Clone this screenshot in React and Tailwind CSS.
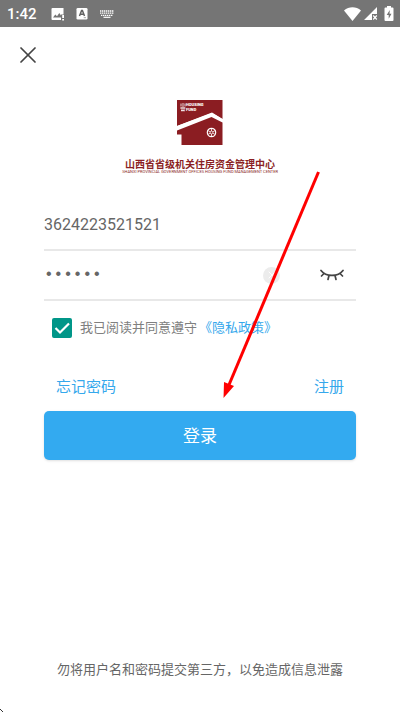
import { useState } from "react";
import { X } from "lucide-react";

function StatusBar() {
  return (
    <header className="flex h-[27px] items-center justify-between bg-[#757575] pr-1 pl-[7px] text-white">
      <div className="flex items-center">
        <span className="w-[44px] text-[15px] leading-5 font-medium">1:42</span>
        <svg className="h-[14px] w-[14px]" viewBox="0 0 14 14" fill="currentColor">
          <path d="M1.5 1H12.5V7.5H10V13H1.5Q.5 13 .5 12V2Q.5 1 1.5 1Z" />
          <path d="M2 10.5 4.3 7.5 6 9.3 8.3 6 10 8.4V10.5Z" fill="#757575" />
          <path d="M11.2 8H13V11H11.2ZM11.2 12H13V13.5H11.2Z" />
        </svg>
        <svg className="ml-[11px] h-[13px] w-[12px]" viewBox="0 0 12 13">
          <rect x=".5" y="1" width="11" height="11.5" rx="1.3" fill="currentColor" />
          <path d="M3.5 9 5.6 3.5H6.4L8.5 9M4.3 7.2H7.7" fill="none" stroke="#626262" strokeWidth="1.5" />
          <path d="M7.7 10.7H10" stroke="#aaa" />
        </svg>
        <svg className="ml-3 h-[10px] w-[14px]" viewBox="0 0 14 10" stroke="currentColor">
          <path d="M0 2H14M0 4.2H14M1 6.4H13" strokeWidth="1.3" strokeDasharray="1.4 .6" />
          <path d="M3.5 8.3H10.5" strokeWidth="1.2" />
        </svg>
      </div>
      <div className="flex items-center">
        <svg className="h-[14px] w-[17px]" viewBox="0 0 17 14" fill="currentColor">
          <path d="M0 3.5C5-.8 12-.8 17 3.5L8.5 14Z" />
        </svg>
        <svg className="ml-[3px] h-[14px] w-[14px]" viewBox="0 0 14 14">
          <path d="M0 13 13 0V7H8V13Z" fill="currentColor" />
          <path d="M9.2 8.5 12.8 12.5M12.8 8.5 9.2 12.5" stroke="currentColor" strokeWidth="1.2" />
        </svg>
        <svg className="mr-[2px] ml-[6px] h-[15px] w-[10px]" viewBox="0 0 10 15">
          <path d="M3 0H7V1.5H8.5Q9.5 1.5 9.5 2.5V14Q9.5 15 8.5 15H1.5Q.5 15 .5 14V2.5Q.5 1.5 1.5 1.5H3Z" fill="currentColor" />
          <path d="M5.8 4 2.7 9H4.7V12.7L7.5 7.7H5.5Z" fill="#757575" />
        </svg>
      </div>
    </header>
  );
}

function Logo() {
  return (
    <div className="flex flex-col items-center text-[#8b1f24]">
      <svg className="h-[46px] w-[46px]" viewBox="0 0 46 46">
        <path d="M0 0H45.5V19L35 12.5 0 26Z" fill="#8b1d22" />
        <path d="M0 26 35 13 45.5 19V22L34.5 16.5 0 31Z" fill="#fff" />
        <path d="M0 30.5 34.5 17 45.5 22.5V45H4.5V34.5H0Z" fill="#8b1d22" />
        <g fill="none" stroke="#fff">
          <path d="M4 3.5V6.5M6 3V7M8 3.5V6.5M3 8H8.5M4 10.5H7.5M5 7V11.5M7 7V11.5" strokeWidth=".8" />
          <circle cx="34.5" cy="32.5" r="4.2" strokeWidth="1.2" />
          <circle cx="34.5" cy="32.5" r="1.4" strokeWidth=".8" />
          <path d="M34.5 28.5V31M34.5 34V36.5M30.8 30.5 33.2 31.8M35.8 33.2 38.2 34.5M30.8 34.5 33.2 33.2M35.8 31.8 38.2 30.5" strokeWidth=".8" />
        </g>
        <text x="9" y="6" fill="#fff" fontSize="4" fontWeight="900">HOUSING</text>
        <text x="9" y="11" fill="#fff" fontSize="4" fontWeight="900">FUND</text>
      </svg>
      <h1 className="mt-[14px] text-[10px] leading-[10px] font-bold whitespace-nowrap">山西省省级机关住房资金管理中心</h1>
      <p className="text-[4px] leading-[4px] whitespace-nowrap">
        SHANXI PROVINCIAL GOVERNMENT OFFICES HOUSING FUND MANAGEMENT CENTER
      </p>
    </div>
  );
}

function ClosedEye() {
  return (
    <svg className="h-3 w-6" viewBox="0 0 24 12" fill="none" stroke="#444" strokeWidth="1.7" strokeLinecap="round">
      <path d="M1 1.5C6 8 18 8 23 1.5M4 4.5 1.5 7M9 6.5 8 10.5M15 6.5 16 10.5M20 4.5 22.5 7" />
    </svg>
  );
}

export default function App() {
  const [account, setAccount] = useState("3624223521521");
  const [password, setPassword] = useState("123456");
  const [visible, setVisible] = useState(false);
  const [agreed, setAgreed] = useState(true);

  return (
    <div className="relative flex min-h-screen flex-col bg-white font-[Roboto,'Noto_Sans_CJK_SC',sans-serif] text-[#666]">
      <StatusBar />

      <main className="flex grow flex-col">
        <button type="button" aria-label="关闭" className="mt-[14px] ml-[14px] h-7 w-7">
          <X className="h-7 w-7 text-[#444]" strokeWidth={1.5} />
        </button>

        <div className="mt-[31px]">
          <Logo />
        </div>

        <form className="relative mx-11 mt-[27px] flex flex-col" onSubmit={(e) => e.preventDefault()}>
          <div className="flex h-[50px] items-center border-b-2 border-[#e8e8e8]">
            <input
              aria-label="账号"
              className="w-full text-[16px] leading-5 outline-none"
              value={account}
              onChange={(e) => setAccount(e.target.value)}
            />
          </div>

          <div className="flex h-[50px] items-center border-b-2 border-[#e8e8e8]">
            <input
              type={visible ? "text" : "password"}
              aria-label="密码"
              className="min-w-0 grow font-['Liberation_Mono',monospace] text-[16px] leading-5 outline-none"
              value={password}
              onChange={(e) => setPassword(e.target.value)}
            />
            <button
              type="button"
              aria-label="清除"
              onClick={() => setPassword("")}
              className="flex h-[17px] w-[17px] items-center justify-center rounded-full bg-[#ececec] text-white"
            >
              <X className="h-3 w-3" />
            </button>
            <button type="button" aria-label="显示密码" onClick={() => setVisible(!visible)} className="mr-3 ml-10">
              <ClosedEye />
            </button>
          </div>

          <div className="mt-[17px] flex h-5 items-center pl-2 text-[13px] leading-5">
            <span className="relative h-5 w-5">
              <input
                id="agree"
                type="checkbox"
                className="peer block h-5 w-5 appearance-none rounded-[2px] border-2 border-[#009688] checked:bg-[#009688]"
                checked={agreed}
                onChange={(e) => setAgreed(e.target.checked)}
              />
              <svg
                className="pointer-events-none absolute inset-0 hidden h-5 w-5 peer-checked:block"
                viewBox="0 0 20 20"
                fill="none"
                stroke="#fff"
                strokeWidth="2.2"
              >
                <path d="M3.5 10 8 14.5 17 5.5" />
              </svg>
            </span>
            <label htmlFor="agree" className="ml-2 text-[#808080]">我已阅读并同意遵守</label>
            <a href="#privacy" className="ml-[2px] text-[#35a8ec]">《隐私政策》</a>
          </div>

          <div className="mt-[37px] flex justify-between px-3 text-[15px] leading-6 text-[#35a8ec]">
            <a href="#forgot">忘记密码</a>
            <a href="#register">注册</a>
          </div>

          <button
            type="submit"
            className="mt-3 h-[49px] rounded-[5px] bg-[#33aaf0] text-[17px] leading-6 text-white shadow-sm"
          >
            登录
          </button>

          {/* pointer to the login button */}
          <svg
            className="pointer-events-none absolute -top-[30px] left-[178px] h-[230px] w-[100px]"
            viewBox="0 0 100 230"
            fill="#f00"
          >
            <path d="M96.5 1 6.5 215" stroke="#f00" strokeWidth="3" />
            <path d="M1.5 227 2 211 12 215Z" />
          </svg>
        </form>

        <p className="mt-auto pb-8 text-center text-[13px] leading-5">勿将用户名和密码提交第三方，以免造成信息泄露</p>
      </main>

      <svg className="absolute bottom-0 left-0 h-[3px] w-[3px]" viewBox="0 0 3 3" fill="#333">
        <path d="M0 0H1V1H0ZM1 1H2V2H1ZM2 2H3V3H2Z" />
      </svg>
    </div>
  );
}
